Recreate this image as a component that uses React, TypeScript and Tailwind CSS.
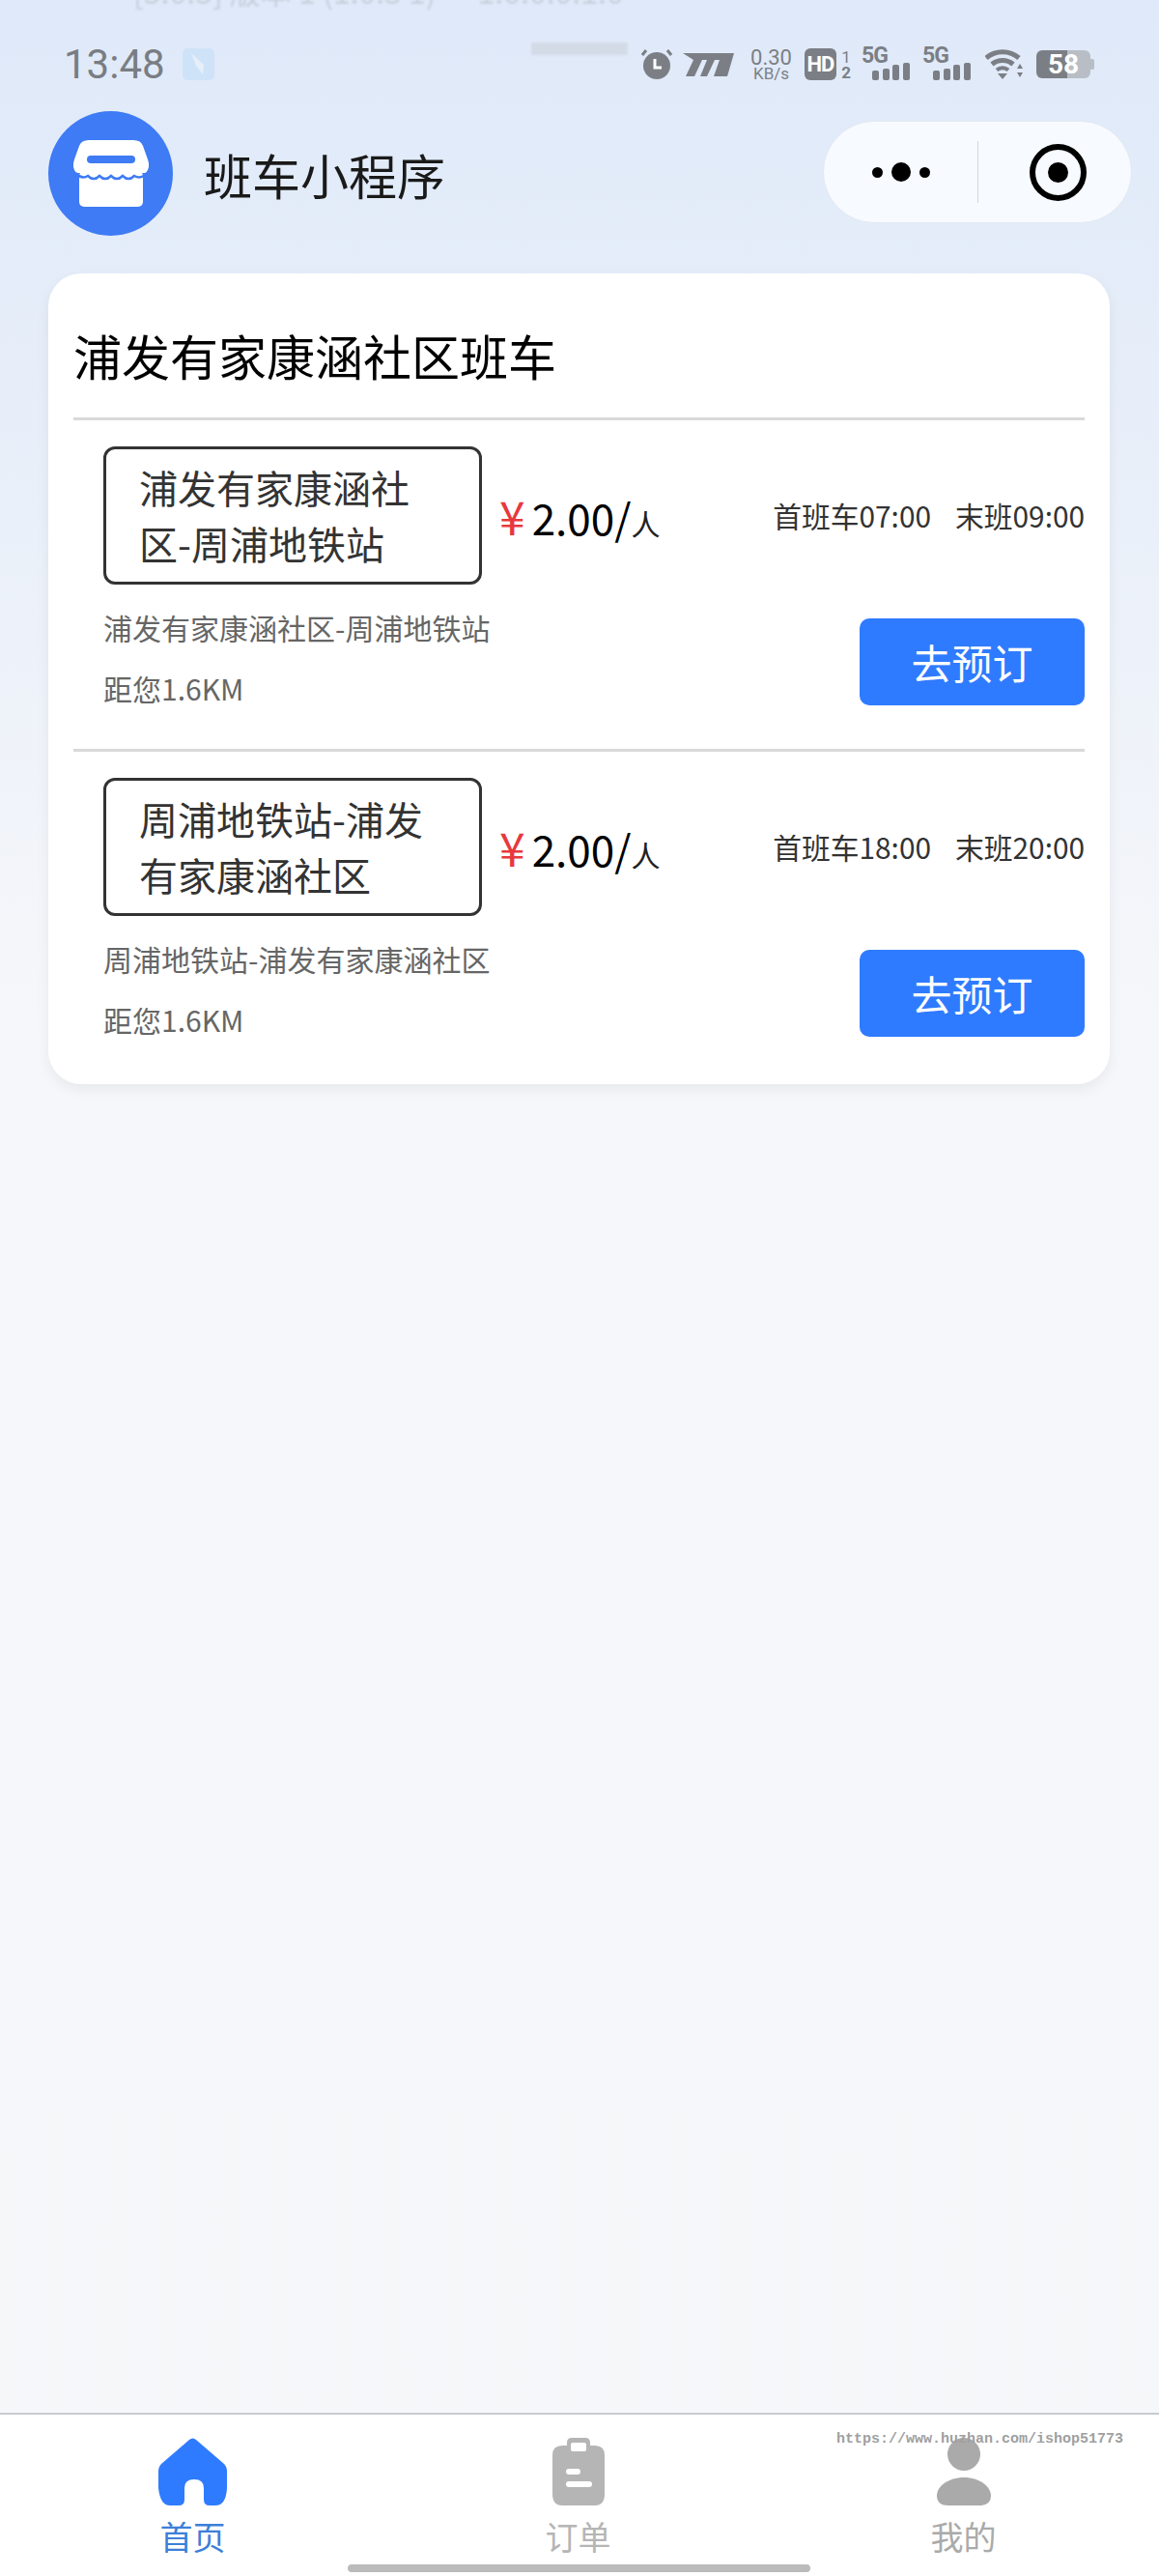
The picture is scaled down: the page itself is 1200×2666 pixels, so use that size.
const FONT = "font-['Noto_Sans_CJK_SC','Noto_Sans',sans-serif]";

const routes = [
  { name: "浦发有家康涵社区-周浦地铁站", first: "07:00", last: "09:00", pb: "pb-[31px]" },
  { name: "周浦地铁站-浦发有家康涵社区", first: "18:00", last: "20:00", pb: "pb-[35px]" },
];

function Alarm() {
  return (
    <svg width="32" height="31" viewBox="0 0 32 31" className="mr-[11px]">
      <circle cx="16" cy="17" r="14" fill="#7b7f85" />
      <path d="M1 6 5 1M31 6 27 1" stroke="#7b7f85" strokeWidth="3" fill="none" />
      <path d="M14 10v9h7" stroke="#fff" strokeWidth="3" fill="none" />
    </svg>
  );
}

function Signal() {
  return (
    <div className="relative w-[50px] h-[33px]">
      <span className="absolute left-0 top-[-3px] text-[23px] leading-[22px] font-bold tracking-[-1px] text-[#7b7f85] font-['Roboto',sans-serif]">5G</span>
      <svg width="39" height="18" viewBox="0 0 39 18" className="absolute right-0 bottom-0">
        <rect x="0" y="8" width="7" height="10" rx="2" fill="#7b7f85" />
        <rect x="11" y="6" width="7" height="12" rx="2" fill="#7b7f85" />
        <rect x="21" y="2" width="7" height="16" rx="2" fill="#7b7f85" />
        <rect x="32" y="0" width="7" height="18" rx="2" fill="#7b7f85" />
      </svg>
    </div>
  );
}

function StatusBar() {
  return (
    <div className="flex items-center h-[33px] mt-[50px] pl-[66px] pr-[67px]">
      <span className="text-[42px] leading-[33px] text-[#797d83] font-['Roboto',sans-serif]">13:48</span>
      <svg width="33" height="33" viewBox="0 0 33 33" className="ml-[18px]">
        <rect width="33" height="33" rx="5" fill="#cfe3f8" />
        <path d="M9 5 L22 17 L21 27 L14 18 Z" fill="#e6eff9" />
      </svg>
      <div className="ml-auto flex items-center">
        <Alarm />
        <svg width="53" height="24" viewBox="0 0 53 24" className="mr-[17px]">
          <path d="M0 0H53L46 24H32L38 7H33L25 24H18L25 7H20L12 24H3L11 7Z" fill="#7b7f85" />
        </svg>
        <div className="w-[43px] mr-[13px] flex flex-col items-center text-[#7b7f85] font-['Roboto',sans-serif]">
          <span className="text-[22px] leading-[19px]">0.30</span>
          <span className="text-[17px] leading-[15px]">KB/s</span>
        </div>
        <div className="w-[33px] h-[33px] rounded-[6px] bg-[#7b7f85] text-white text-[22px] leading-[33px] font-bold tracking-[-1px] text-center font-['Roboto',sans-serif]">HD</div>
        <div className="w-[8px] ml-[6px] mr-[12px] flex flex-col items-center text-[#7b7f85] text-[17px] leading-[16px] font-['Roboto',sans-serif]">
          <span>1</span>
          <span className="font-bold">2</span>
        </div>
        <Signal />
        <div className="w-[13px]" />
        <Signal />
        <svg width="40" height="31" viewBox="0 0 40 31" className="ml-[15px] mr-[13px]">
          <path d="M1 9a26 26 0 0 1 34 0" stroke="#7b7f85" strokeWidth="5" fill="none" />
          <path d="M7 15.500a17 17 0 0 1 22 0" stroke="#7b7f85" strokeWidth="5" fill="none" />
          <path d="M12 21.500a9 9 0 0 1 12 0" stroke="#7b7f85" strokeWidth="4" fill="none" />
          <path d="M13 25h10l-5 6z" fill="#7b7f85" />
          <path d="M33 20h6l-3-5zM33 24h6l-3 5z" fill="#7b7f85" />
        </svg>
        <div className="flex items-center">
          <div className="w-[56px] h-[29px] rounded-[6px] bg-[linear-gradient(90deg,#7b7f85_58%,#b9bec6_58%)] text-white text-[28px] leading-[29px] font-bold text-center font-['Roboto',sans-serif]">58</div>
          <div className="w-[4px] h-[11px] rounded-r-[2px] bg-[#b9bec6]" />
        </div>
      </div>
    </div>
  );
}

function StoreLogo() {
  return (
    <div className="w-[129px] h-[129px] rounded-full bg-[#3e7bf4] shrink-0">
      <svg width="129" height="129" viewBox="0 0 129 129">
        <path d="M42 30H88Q96 30 98 36L103 50Q106 58 101 64L29 64Q24 58 27 50L32 36Q34 30 42 30Z" fill="#fff" />
        <rect x="32" y="62" width="66" height="37" rx="5" fill="#fff" />
        <rect x="40" y="46" width="50" height="8" rx="4" fill="#3e7bf4" />
        <path d="M28 64q7 7 13 3q6 6 12 0q6 6 12 0q6 6 12 0q6 6 12 0q7 4 13-3" stroke="#3e7bf4" strokeWidth="2.5" fill="none" />
      </svg>
    </div>
  );
}

function Capsule() {
  return (
    <div className="w-[320px] h-[106px] rounded-full bg-[#f7faff] border border-[#e4e9f2] flex items-center">
      <div className="w-[159px] flex items-center justify-center gap-[9px]">
        <span className="w-[11px] h-[11px] rounded-full bg-black" />
        <span className="w-[20px] h-[20px] rounded-full bg-black" />
        <span className="w-[11px] h-[11px] rounded-full bg-black" />
      </div>
      <div className="w-[1px] h-[64px] bg-[#d4d9e0]" />
      <div className="flex-1 flex items-center justify-center pl-[6px]">
        <div className="w-[59px] h-[59px] rounded-full border-[6px] border-black flex items-center justify-center">
          <div className="w-[21px] h-[21px] rounded-full bg-black" />
        </div>
      </div>
    </div>
  );
}

function Route({ name, first, last, pb }: { name: string; first: string; last: string; pb: string }) {
  return (
    <div className={`border-t-[3px] border-[#d9d9d9] pt-[27px] ${pb}`}>
      <div className="flex items-center">
        <div className="ml-[31px] w-[392px] h-[143px] rounded-[12px] border-[3px] border-[#333] pl-[34px] pr-[30px] pt-[10px] text-[40px] leading-[58px] text-[#333]">
          {name}
        </div>
        <div className="ml-[18px] mb-[2px] flex items-baseline text-black">
          <span className="text-[48px] leading-none text-[#e8383d] mr-[7px]">¥</span>
          <span className="text-[44px] leading-none">2.00/</span>
          <span className="text-[30px] leading-none text-[#222]">人</span>
        </div>
        <div className="ml-auto flex gap-[25px] text-[29.8px] leading-[40px] text-[#333] mb-[2px]">
          <span>首班车{first}</span>
          <span>末班{last}</span>
        </div>
      </div>
      <div className="flex items-start justify-between mt-[13px]">
        <div className="ml-[31px] text-[30px] leading-[63px] text-[#666]">
          <div>{name}</div>
          <div>距您1.6KM</div>
        </div>
        <button className="mt-[22px] w-[233px] h-[90px] rounded-[10px] bg-[#2f7bff] text-white text-[42px] leading-none">去预订</button>
      </div>
    </div>
  );
}

function NavItem({ label, color, children }: { label: string; color: string; children: React.ReactNode }) {
  return (
    <div className="flex flex-col items-center pt-[24px]">
      <div className="h-[70px] flex items-center justify-center">{children}</div>
      <span className={`mt-[15px] text-[34px] leading-[34px] ${color}`}>{label}</span>
    </div>
  );
}

export default function App() {
  return (
    <div className={`relative w-[1200px] h-[2666px] overflow-hidden flex flex-col bg-[linear-gradient(180deg,#dfe9f9_0%,#e5edf9_12%,#f6f7fa_40%,#f6f7f9_100%)] ${FONT}`}>
      {/* notification sliding away behind the status bar */}
      <div className="absolute left-[138px] top-[-28px] text-[32px] leading-[36px] text-[#c8d0dc] blur-[1px] whitespace-pre">[5.0.3] 版本 1 (1.0.3 1)      1.0.0.0.1.0</div>
      <div className="absolute left-[550px] top-[44px] w-[100px] h-[13px] bg-[#d3dbe7] blur-[1px]" />

      <StatusBar />

      <header className="flex items-center mt-[32px] pl-[50px] pr-[28px]">
        <StoreLogo />
        <span className="ml-[32px] text-[50px] leading-[60px] text-[#1a1a1a]">班车小程序</span>
        <div className="ml-auto mb-[3px]">
          <Capsule />
        </div>
      </header>

      <main className="flex-1 pt-[39px] px-[50px]">
        <div className="w-[1099px] rounded-[34px] bg-white shadow-[0_6px_14px_rgba(0,0,0,0.06)] px-[26px]">
          <div className="h-[149px] pt-[59px] text-[50px] leading-[50px] text-black">浦发有家康涵社区班车</div>
          {routes.map((r) => (
            <Route key={r.name} {...r} />
          ))}
        </div>
      </main>

      <nav className="h-[169px] shrink-0 bg-white border-t-[2px] border-[#c8cbd0] grid grid-cols-3 pr-[3px]">
        <NavItem label="首页" color="text-[#3d7fd9]">
          <svg width="71" height="70" viewBox="0 0 71 70">
            <path d="M32 2Q35.500 -1 39 2L68 27Q71 30 71 35V52Q70 70 59 70H53Q47 70 47 64V52Q47 43 37 43Q27 43 27 52V64Q27 70 21 70H12Q2 70 0 52V35Q0 30 3 27Z" fill="#2f7bff" />
          </svg>
        </NavItem>
        <NavItem label="订单" color="text-[#b5b5b5]">
          <svg width="54" height="70" viewBox="0 0 54 70">
            <path d="M15 8V5Q15 0 20 0H34Q39 0 39 5V8H44Q54 8 54 18V58Q54 70 44 70H10Q0 70 0 58V18Q0 8 10 8Z" fill="#b5b5b5" />
            <rect x="19" y="5" width="16" height="9" rx="2" fill="#fff" />
            <rect x="14" y="32" width="15" height="6" rx="3" fill="#fff" />
            <rect x="14" y="45" width="27" height="6" rx="3" fill="#fff" />
          </svg>
        </NavItem>
        <NavItem label="我的" color="text-[#aaaaaa]">
          <svg width="56" height="70" viewBox="0 0 56 70">
            <circle cx="28" cy="17" r="17" fill="#aaaaaa" />
            <path d="M28 41C44 41 56 50 56 60Q56 70 44 70H12Q0 70 0 60C0 50 12 41 28 41Z" fill="#aaaaaa" />
          </svg>
        </NavItem>
      </nav>

      {/* watermark and home indicator lie over the tab bar */}
      <div className="absolute left-[866px] top-[2516px] text-[15px] leading-[18px] font-bold text-[#a0a0a0] font-['Liberation_Mono',monospace] whitespace-pre">https://www.huzhan.com/ishop51773</div>
      <div className="absolute left-[360px] top-[2654px] w-[479px] h-[8px] rounded-full bg-[#bbbbbb]" />
    </div>
  );
}
